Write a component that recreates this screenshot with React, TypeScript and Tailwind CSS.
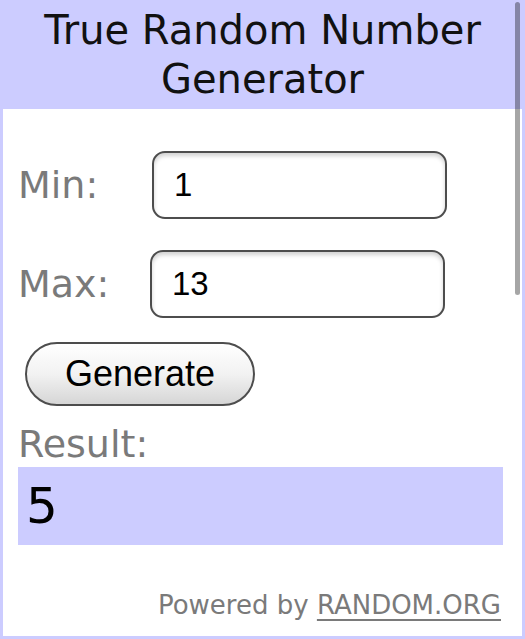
import React from "react";

const dv = { fontFamily: '"DejaVu Sans", Verdana, sans-serif' };
const ls = { fontFamily: '"Liberation Sans", Arial, sans-serif' };

export default function App() {
  return (
    <div className="relative w-[525px] h-[639px] overflow-hidden bg-[#ccccff] px-[3px] pb-[3px] flex flex-col">
      <div
        className="h-[109px] pt-[6px] text-center text-[40px] leading-[49px] text-[#111111]"
        style={dv}
      >
        True Random Number
        <br />
        Generator
      </div>
      <div className="flex-1 bg-white pl-[15px] pr-[21px] flex flex-col">
        <div className="mt-[42px] flex items-center h-[68px]">
          <div className="w-[134px] text-[38px] text-[#7a7a7a] leading-[44px]" style={dv}>
            Min:
          </div>
          <input
            readOnly
            value="1"
            className="w-[295px] h-[68px] rounded-[13px] border-2 border-[#4d4d4d] bg-white pl-[20px] text-[33px] text-black outline-none shadow-[inset_0_3px_4px_rgba(0,0,0,0.18)]"
            style={ls}
          />
        </div>
        <div className="mt-[31px] flex items-center h-[68px]">
          <div className="w-[132px] text-[38px] text-[#7a7a7a] leading-[44px]" style={dv}>
            Max:
          </div>
          <input
            readOnly
            value="13"
            className="w-[295px] h-[68px] rounded-[13px] border-2 border-[#4d4d4d] bg-white pl-[20px] text-[33px] text-black outline-none shadow-[inset_0_3px_4px_rgba(0,0,0,0.18)]"
            style={ls}
          />
        </div>
        <div className="mt-[24px] ml-[7px]">
          <button
            className="w-[230px] h-[64px] rounded-full border-2 border-[#4d4d4d] bg-linear-to-b from-white via-[#f2f2f2] to-[#d6d6d6] text-[36px] text-black flex items-center justify-center"
            style={ls}
          >
            Generate
          </button>
        </div>
        <div className="mt-[16px] text-[38px] leading-[44px] text-[#7a7a7a]" style={dv}>
          Result:
        </div>
        <div className="mt-[1px] w-[485px] h-[78px] bg-[#ccccff] pl-[8px] flex items-center">
          <span className="text-[50px] text-black leading-none" style={dv}>
            5
          </span>
        </div>
        <div className="flex-1" />
        <div className="mb-[15px] text-right text-[26px] text-[#7a7a7a] leading-[32px]" style={dv}>
          Powered by <span className="underline decoration-[#7a7a7a] underline-offset-[5px]">RANDOM.ORG</span>
        </div>
      </div>
      <div className="absolute right-[5px] top-[2px] w-[5px] h-[293px] rounded-full bg-black/35" />
    </div>
  );
}
